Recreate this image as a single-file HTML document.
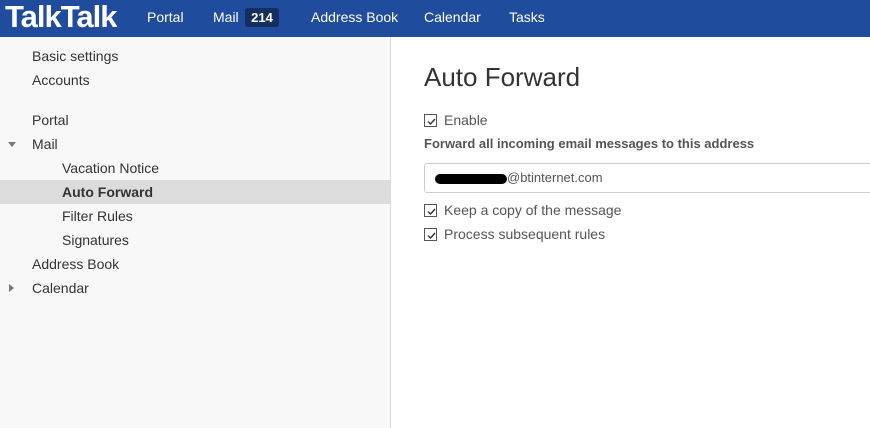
<!DOCTYPE html>
<html><head><meta charset="utf-8"><style>
*{margin:0;padding:0;box-sizing:border-box}
body{width:870px;height:428px;overflow:hidden;font-family:"Liberation Sans",Arial,sans-serif;background:#fff;position:relative;color:#333}
.hdr{position:absolute;left:0;top:0;width:870px;height:37px;background:#1f4c9c}
.logo{position:absolute;left:5px;top:0px;color:#fff;font-weight:bold;font-size:31px;letter-spacing:-1px;line-height:34px}
.nav{position:absolute;top:9px;color:#fff;font-size:14px}
.badge{position:absolute;left:245px;top:8px;width:34px;height:19px;background:#142f5e;border-radius:3px;color:#fff;font-weight:bold;font-size:13px;text-align:center;line-height:19px}
.side{position:absolute;left:0;top:37px;width:391px;height:391px;background:#f8f8f8;border-right:1px solid #dcdcdc}
.it{position:absolute;font-size:14px;color:#333;height:24px;line-height:24px;width:391px}
.sel{background:#dcdcdc;font-weight:bold;left:0}
h1{position:absolute;left:424px;top:62px;font-weight:normal;font-size:26px;color:#333}
.cb{position:absolute;width:13px;height:13px;border:1px solid #555;background:#fff}
.cb svg{position:absolute;left:1px;top:1px}
.lbl{position:absolute;font-size:14px;color:#555}
.inp{position:absolute;left:424px;top:163px;width:460px;height:30px;border:1px solid #ccc;border-radius:3px;font-size:13px;line-height:28px;padding-left:8px;color:#555}
</style></head><body>
<div class="hdr">
<div class="logo">TalkTalk</div>
<div class="nav" style="left:147px">Portal</div>
<div class="nav" style="left:213px">Mail</div>
<div class="badge">214</div>
<div class="nav" style="left:311px">Address Book</div>
<div class="nav" style="left:424px">Calendar</div>
<div class="nav" style="left:509px">Tasks</div>
</div>
<div class="side">
<div class="it" style="top:7px;left:0;padding-left:32px">Basic settings</div>
<div class="it" style="top:31px;padding-left:32px">Accounts</div>
<div class="it" style="top:71px;padding-left:32px">Portal</div>
<div class="it" style="top:95px;padding-left:32px">Mail</div>
<div style="position:absolute;left:8px;top:105px;width:0;height:0;border-left:4px solid transparent;border-right:4px solid transparent;border-top:5px solid #777"></div>
<div class="it" style="top:119px;padding-left:62px">Vacation Notice</div>
<div class="it sel" style="top:143px;padding-left:62px">Auto Forward</div>
<div class="it" style="top:167px;padding-left:62px">Filter Rules</div>
<div class="it" style="top:191px;padding-left:62px">Signatures</div>
<div class="it" style="top:215px;padding-left:32px">Address Book</div>
<div class="it" style="top:239px;padding-left:32px">Calendar</div>
<div style="position:absolute;left:9px;top:247px;width:0;height:0;border-top:4px solid transparent;border-bottom:4px solid transparent;border-left:5px solid #777"></div>
</div>
<h1>Auto Forward</h1>
<div class="cb" style="left:424px;top:114px"><svg width="11" height="11"><path d="M2 5.5l2.5 2.5 4.5-5" stroke="#333" stroke-width="1.4" fill="none"/></svg></div>
<div class="lbl" style="left:444px;top:112px">Enable</div>
<div class="lbl" style="left:424px;top:136px;font-weight:bold;font-size:13px">Forward all incoming email messages to this address</div>
<div class="inp"><span style="display:inline-block;width:72px;height:10px;background:#000;border-radius:5px;vertical-align:middle;margin-left:2px"></span>@btinternet.com</div>
<div class="cb" style="left:424px;top:204px"><svg width="11" height="11"><path d="M2 5.5l2.5 2.5 4.5-5" stroke="#333" stroke-width="1.4" fill="none"/></svg></div>
<div class="lbl" style="left:444px;top:202px">Keep a copy of the message</div>
<div class="cb" style="left:424px;top:228px"><svg width="11" height="11"><path d="M2 5.5l2.5 2.5 4.5-5" stroke="#333" stroke-width="1.4" fill="none"/></svg></div>
<div class="lbl" style="left:444px;top:226px">Process subsequent rules</div>
</body></html>
